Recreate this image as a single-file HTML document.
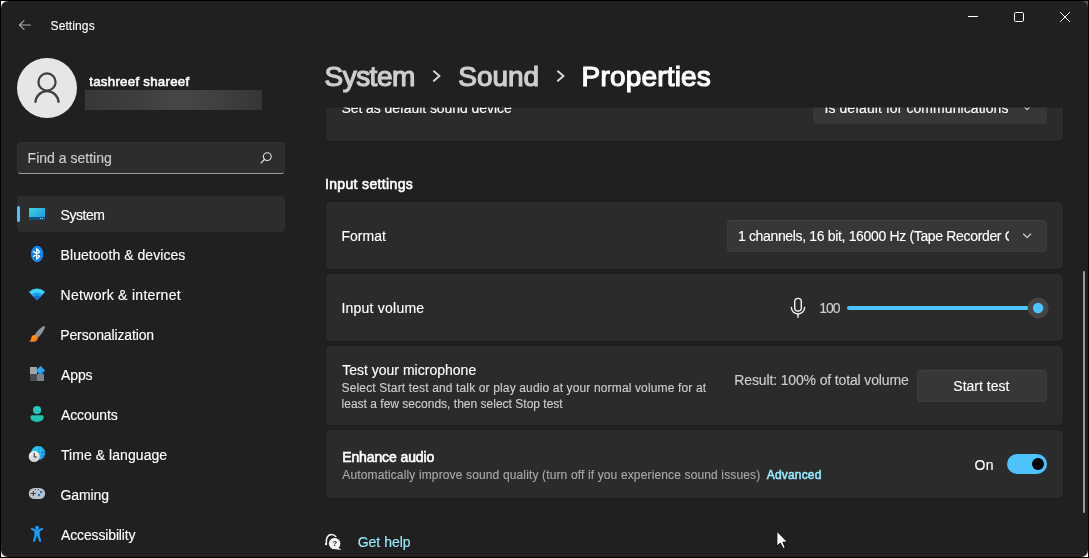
<!DOCTYPE html>
<html lang="en">
<head>
<meta charset="utf-8">
<title>Settings</title>
<style>
html,body{margin:0;padding:0;}
body{width:1089px;height:558px;overflow:hidden;background:#000;font-family:"Liberation Sans",sans-serif;color:#fff;position:relative;}
.abs{position:absolute;}
svg{position:absolute;overflow:visible;}
.t{position:absolute;white-space:nowrap;line-height:1;}
.card{position:absolute;left:325px;width:737px;background:#2b2b2b;border:1px solid #1d1d1d;border-radius:5px;}
.btn{position:absolute;background:#373737;border-radius:4px;box-sizing:border-box;border:1px solid #3c3c3c;border-top-color:#404040;}
</style>
</head>
<body>
<!-- corner underlays -->
<div class="abs" style="left:1px;top:1px;width:1087px;height:556px;background:#f4f4f4;"></div>
<div class="abs" style="left:1080px;top:1px;width:8px;height:8px;background:#555;"></div>
<!-- window -->
<div class="abs" style="left:1px;top:1px;width:1087px;height:556px;background:#202020;border-radius:7px;"></div>

<!-- title bar -->
<svg style="left:18px;top:19px" width="14" height="12" viewBox="0 0 14 12"><path d="M6 1.6 L1.4 6 L6 10.4 M1.4 6 H12.4" fill="none" stroke="#a8a8a8" stroke-width="1.1" stroke-linecap="round" stroke-linejoin="round"/></svg>
<svg style="left:968px;top:11px" width="11" height="12" viewBox="0 0 11 12"><path d="M0 5.5 H10" stroke="#fff" stroke-width="1" fill="none"/></svg>
<svg style="left:1014px;top:12px" width="11" height="11" viewBox="0 0 11 11"><rect x="0.5" y="0.5" width="9" height="9" rx="1.2" stroke="#fff" stroke-width="1" fill="none"/></svg>
<svg style="left:1060px;top:12px" width="11" height="11" viewBox="0 0 11 11"><path d="M0.2 0.2 L9.8 9.8 M9.8 0.2 L0.2 9.8" stroke="#fff" stroke-width="1" fill="none"/></svg>

<!-- account -->
<div class="abs" style="left:17px;top:58px;width:60px;height:60px;border-radius:50%;background:#e6e6e6;"></div>
<svg style="left:17px;top:58px" width="60" height="60" viewBox="0 0 60 60"><circle cx="30" cy="24" r="8.6" fill="none" stroke="#3e3e3e" stroke-width="2.2"/><path d="M18.4 44.8 A11.6 11.6 0 0 1 41.6 44.8" fill="none" stroke="#3e3e3e" stroke-width="2.2"/></svg>
<div class="abs" style="left:85px;top:90px;width:177px;height:20px;background:linear-gradient(90deg,#383838 0%,#3e3e3e 30%,#474747 53%,#404040 75%,#363636 100%);"></div>

<!-- search -->
<div class="abs" style="left:17px;top:142px;width:268px;height:32px;background:#2d2d2d;border-radius:4px;border:1px solid #323232;border-bottom:1px solid #9a9a9a;box-sizing:border-box;"></div>
<svg style="left:259px;top:151px" width="14" height="14" viewBox="0 0 14 14"><circle cx="8.3" cy="5.6" r="3.9" fill="none" stroke="#e4e4e4" stroke-width="1.1"/><path d="M5.4 8.5 L2.1 11.9" stroke="#e4e4e4" stroke-width="1.2" stroke-linecap="round"/></svg>

<!-- nav selection -->
<div class="abs" style="left:17px;top:196px;width:268px;height:36px;background:#2d2d2d;border-radius:4px;"></div>
<div class="abs" style="left:17px;top:206px;width:3px;height:16px;background:#4cc2ff;border-radius:1.5px;"></div>

<!--ICONS_START-->
<!-- nav icons -->
<svg style="left:29px;top:208px" width="16" height="12" viewBox="0 0 16 12"><defs><linearGradient id="gSys" x1="0" y1="0" x2="1" y2="1"><stop offset="0" stop-color="#3ad6dc"/><stop offset="1" stop-color="#1d8fe2"/></linearGradient></defs><rect x="0" y="0" width="16" height="12" rx="1" fill="url(#gSys)"/><rect x="0" y="9" width="16" height="3" fill="#0e5487"/><rect x="11" y="10" width="1" height="1" fill="#9fd8f5"/><rect x="13" y="10" width="1" height="1" fill="#9fd8f5"/></svg>
<svg style="left:30px;top:245px" width="14" height="18" viewBox="0 0 14 18"><ellipse cx="7.15" cy="9" rx="6.25" ry="8.3" fill="#0c86f2"/><path d="M3.4 6.5 L9.7 11.3 L6.6 14.2 V3.8 L9.7 6.7 L3.4 11.5" fill="none" stroke="#fff" stroke-width="1.3" stroke-linejoin="round" stroke-linecap="round"/></svg>
<svg style="left:29px;top:288px" width="16" height="13" viewBox="0 0 16 13"><path d="M8 12.1 L0.3 3.9 A11.3 11.3 0 0 1 15.7 3.9 Z" fill="#3fd1fb" stroke="#3fd1fb" stroke-width="0.6" stroke-linejoin="round"/><path d="M8 12.3 L2.7 6.48 A7.8 7.8 0 0 1 13.3 6.48 Z" fill="#1f9fe9"/><path d="M8 12.3 L4.74 8.68 A4.8 4.8 0 0 1 11.26 8.68 Z" fill="#1070d0"/></svg>
<svg style="left:28px;top:325px" width="18" height="18" viewBox="0 0 18 18"><defs><linearGradient id="gBr" x1="0" y1="0" x2="1" y2="1"><stop offset="0" stop-color="#fbb41c"/><stop offset="1" stop-color="#f7630c"/></linearGradient></defs><path d="M15.1 1.2 C16.3 0.7 17.2 1.5 16.8 2.7 C15.6 6.2 13.1 9.7 9.7 12.9 L6.5 10.4 C8.9 6.4 11.9 3.1 15.1 1.2 Z" fill="#8b959f"/><path d="M6.5 10.1 C8.5 10.2 9.9 11.6 9.7 13.4 C9.5 15.8 7.2 17 4.7 16.8 C3.3 16.7 2 16.9 1.1 16.3 C2.4 15.8 3 15 3.2 13.6 C3.5 11.4 4.7 10 6.5 10.1 Z" fill="url(#gBr)"/></svg>
<svg style="left:29px;top:365px" width="17" height="17" viewBox="0 0 17 17"><defs><linearGradient id="gAp" x1="0" y1="0" x2="1" y2="1"><stop offset="0" stop-color="#35c1f6"/><stop offset="1" stop-color="#1b8be6"/></linearGradient></defs><rect x="1" y="2" width="7" height="7" fill="#a0a5ad"/><rect x="1" y="9" width="7" height="7" fill="#484b50"/><rect x="8" y="9" width="7" height="7" fill="#7d8189"/><path d="M11.6 1 L16.2 5.6 L11.6 10.2 L7 5.6 Z" fill="url(#gAp)"/></svg>
<svg style="left:30px;top:405px" width="14" height="18" viewBox="0 0 14 18"><circle cx="7.05" cy="5" r="4.1" fill="#25c8b9"/><path d="M2.2 10.3 H11.9 A1.8 1.8 0 0 1 13.7 12.1 C13.7 15.2 10.9 16.9 7.05 16.9 C3.2 16.9 0.4 15.2 0.4 12.1 A1.8 1.8 0 0 1 2.2 10.3 Z" fill="#22c3b3"/></svg>
<svg style="left:28px;top:445px" width="18" height="18" viewBox="0 0 18 18"><defs><linearGradient id="gGl" x1="0" y1="0" x2="1" y2="1"><stop offset="0" stop-color="#35d4e6"/><stop offset="0.5" stop-color="#1fa4e4"/><stop offset="1" stop-color="#1272d6"/></linearGradient><linearGradient id="gCl" x1="0" y1="0" x2="0" y2="1"><stop offset="0" stop-color="#f4f4f4"/><stop offset="1" stop-color="#cfcfcf"/></linearGradient></defs><circle cx="10.2" cy="8" r="7.1" fill="url(#gGl)"/><path d="M12.8 1.4 V14.6 M8.2 1.2 V8 M3.6 5.4 H16.8 M9 9.4 H17.2 M10 12.6 H15.6" stroke="#4fd0f4" stroke-width="0.8" opacity="0.6" fill="none"/><circle cx="6.2" cy="11.5" r="5.5" fill="url(#gCl)"/><path d="M6.2 8.3 V12 H8.6" fill="none" stroke="#3a3a3a" stroke-width="1.1" stroke-linecap="round" stroke-linejoin="round"/></svg>
<svg style="left:28px;top:487px" width="18" height="13" viewBox="0 0 18 13"><rect x="0.8" y="1" width="16.3" height="11" rx="5.5" fill="#bcc2c9"/><path d="M5.3 4 V9 M2.8 6.5 H7.8" stroke="#33373c" stroke-width="1" fill="none"/><rect x="12" y="4" width="2.1" height="2.1" fill="#0f7bdc"/><rect x="10" y="7" width="2.1" height="2.1" fill="#0f7bdc"/><circle cx="7.4" cy="2.6" r="0.55" fill="#33373c"/><circle cx="10.5" cy="2.6" r="0.55" fill="#33373c"/></svg>
<svg style="left:30px;top:525px" width="14" height="18" viewBox="0 0 14 18"><circle cx="7.05" cy="2.7" r="2" fill="#1a9af0"/><path d="M0.9 3.3 C1.2 2.6 1.9 2.6 2.5 2.9 L5.6 4.6 H8.5 L11.6 2.9 C12.2 2.6 12.9 2.6 13.2 3.3 C13.5 4 13.1 4.5 12.5 4.8 L9.7 6.4 V10.6 L11.1 15.6 C11.3 16.4 10.9 16.9 10.3 17 C9.6 17.1 9.2 16.8 9 16.1 L7.4 11.2 H6.7 L5.1 16.1 C4.9 16.8 4.5 17.1 3.8 17 C3.2 16.9 2.8 16.4 3 15.6 L4.4 10.6 V6.4 L1.6 4.8 C1 4.5 0.6 4 0.9 3.3 Z" fill="#1a9af0"/></svg>
<!--ICONS_END-->

<!-- breadcrumb chevrons -->
<svg style="left:432px;top:70px" width="10" height="13" viewBox="0 0 10 13"><path d="M1.9 1.3 L7.5 6.05 L1.9 10.8" fill="none" stroke="#d6d6d6" stroke-width="2" stroke-linecap="round" stroke-linejoin="round"/></svg>
<svg style="left:556px;top:70px" width="10" height="13" viewBox="0 0 10 13"><path d="M1.9 1.3 L7.5 6.05 L1.9 10.8" fill="none" stroke="#d6d6d6" stroke-width="2" stroke-linecap="round" stroke-linejoin="round"/></svg>

<!-- cards -->
<div class="abs" style="left:325px;top:107px;width:737px;height:34px;background:#2b2b2b;border:1px solid #1d1d1d;border-top:none;border-radius:0 0 5px 5px;"></div>
<div class="abs" style="left:813px;top:107px;width:234px;height:17px;background:#373737;border-radius:0 0 4px 4px;"></div>
<div class="card" style="top:201px;height:67px;"></div>
<div class="card" style="top:273px;height:67px;"></div>
<div class="card" style="top:345px;height:79px;"></div>
<div class="card" style="top:429px;height:68px;"></div>

<!-- dropdown + chevrons -->
<div class="btn" style="left:727px;top:220px;width:320px;height:32px;"></div>
<svg style="left:1022px;top:232px" width="10" height="7" viewBox="0 0 10 7"><path d="M1.5 2 L5.1 5.6 L8.7 2" fill="none" stroke="#d8d8d8" stroke-width="1.1" stroke-linecap="round" stroke-linejoin="round"/></svg>
<div class="abs" style="left:1020px;top:107px;width:14px;height:8px;overflow:hidden;"><svg style="left:2px;top:-3.3px" width="10" height="7" viewBox="0 0 10 7"><path d="M1.5 2 L5.1 5.6 L8.7 2" fill="none" stroke="#d8d8d8" stroke-width="1.1" stroke-linecap="round" stroke-linejoin="round"/></svg></div>

<!-- mic + slider -->
<svg style="left:789px;top:296px" width="18" height="23" viewBox="0 0 18 23"><rect x="5.7" y="2.4" width="6.6" height="12.6" rx="3.3" fill="none" stroke="#f4f4f4" stroke-width="1.4"/><path d="M2.4 11.4 A6.6 6.6 0 0 0 15.6 11.4" fill="none" stroke="#f4f4f4" stroke-width="1.4" stroke-linecap="round"/><path d="M9 18.2 V21.2" stroke="#f4f4f4" stroke-width="1.4" stroke-linecap="round"/></svg>
<div class="abs" style="left:847px;top:306px;width:186px;height:4px;border-radius:2px;background:#4cc2ff;"></div>
<svg style="left:1026px;top:296px" width="24" height="24" viewBox="0 0 24 24"><circle cx="12.1" cy="11.9" r="10.5" fill="#454545"/><circle cx="12.1" cy="12.1" r="5.25" fill="#4cc2ff"/></svg>

<!-- start test button -->
<div class="btn" style="left:917px;top:370px;width:130px;height:32px;"></div>

<!-- toggle -->
<div class="abs" style="left:1007px;top:454px;width:40px;height:20px;border-radius:10px;background:#4cc2ff;"></div>
<div class="abs" style="left:1032px;top:458px;width:12px;height:12px;border-radius:50%;background:#000;"></div>

<!-- get help icon -->
<svg style="left:324px;top:533px;will-change:transform" width="19" height="19" viewBox="0 0 19 19"><path d="M2.4 10.4 C1.7 6.4 3.3 1.4 7.5 1.4 C9.4 1.4 10.9 2.3 11.8 3.7" fill="none" stroke="#f4f4f4" stroke-width="1.5" stroke-linecap="round"/><circle cx="2" cy="11.2" r="1.15" fill="#f4f4f4"/><circle cx="10.65" cy="10.6" r="6.2" fill="#f7f7f7" stroke="#202020" stroke-width="1"/><path d="M13.6 14 L17.4 17 L11.6 16.2 Z" fill="#f7f7f7"/><text x="10.7" y="13.4" font-size="7.6" font-weight="bold" text-anchor="middle" fill="#1c1c1c" font-family="Liberation Sans, sans-serif">?</text></svg>

<!-- scrollbar -->
<div class="abs" style="left:1083px;top:271px;width:2px;height:242px;border-radius:1px;background:#9c9c9c;"></div>

<div class="abs" id="txt" style="left:0;top:0;width:1089px;height:558px;will-change:transform;">
<div class="abs" style="left:326px;top:107px;width:737px;height:34px;overflow:hidden;"><span class="t" style="left:15.45px;top:-5.85px;font-size:14px;letter-spacing:-0.068px;-webkit-text-stroke:0.13px #ffffff;color:#ffffff;">Set as default sound device</span></div>
<div class="abs" style="left:813px;top:107px;width:235px;height:17px;overflow:hidden;"><span class="t" style="left:11.45px;top:-5.85px;font-size:14px;letter-spacing:0.070px;-webkit-text-stroke:0.13px #ffffff;color:#ffffff;">Is default for communications</span></div>
<div class="abs" style="left:728px;top:220px;width:281px;height:32px;overflow:hidden;"><span class="t" style="left:9.90px;top:9.15px;font-size:14px;letter-spacing:-0.338px;-webkit-text-stroke:0.13px #ffffff;color:#ffffff;">1 channels, 16 bit, 16000 Hz (Tape Recorder C</span></div>

<span class="t" style="left:50.55px;top:19.84px;font-size:12px;letter-spacing:0.103px;-webkit-text-stroke:0.11px #ffffff;color:#ffffff;">Settings</span>
<span class="t" style="left:89.23px;top:74.74px;font-size:13.3px;letter-spacing:0.260px;-webkit-text-stroke:0.56px #ffffff;color:#ffffff;">tashreef shareef</span>
<span class="t" style="left:27.60px;top:151.15px;font-size:14px;letter-spacing:0.015px;-webkit-text-stroke:0.13px #cfcfcf;color:#cfcfcf;">Find a setting</span>
<span class="t" style="left:60.60px;top:208.15px;font-size:14px;letter-spacing:-0.465px;-webkit-text-stroke:0.13px #ffffff;color:#ffffff;">System</span>
<span class="t" style="left:60.60px;top:248.15px;font-size:14px;letter-spacing:0.054px;-webkit-text-stroke:0.13px #ffffff;color:#ffffff;">Bluetooth &amp; devices</span>
<span class="t" style="left:60.60px;top:288.15px;font-size:14px;letter-spacing:0.287px;-webkit-text-stroke:0.13px #ffffff;color:#ffffff;">Network &amp; internet</span>
<span class="t" style="left:60.28px;top:328.15px;font-size:14px;letter-spacing:-0.134px;-webkit-text-stroke:0.13px #ffffff;color:#ffffff;">Personalization</span>
<span class="t" style="left:61.00px;top:368.15px;font-size:14px;letter-spacing:-0.121px;-webkit-text-stroke:0.13px #ffffff;color:#ffffff;">Apps</span>
<span class="t" style="left:61.00px;top:408.15px;font-size:14px;letter-spacing:-0.126px;-webkit-text-stroke:0.13px #ffffff;color:#ffffff;">Accounts</span>
<span class="t" style="left:61.00px;top:448.15px;font-size:14px;letter-spacing:0.057px;-webkit-text-stroke:0.13px #ffffff;color:#ffffff;">Time &amp; language</span>
<span class="t" style="left:60.60px;top:488.15px;font-size:14px;letter-spacing:-0.114px;-webkit-text-stroke:0.13px #ffffff;color:#ffffff;">Gaming</span>
<span class="t" style="left:61.00px;top:528.15px;font-size:14px;letter-spacing:-0.142px;-webkit-text-stroke:0.13px #ffffff;color:#ffffff;">Accessibility</span>
<span class="t" style="left:324.47px;top:63.30px;font-size:28px;letter-spacing:-0.508px;-webkit-text-stroke:1.18px #cecece;color:#cecece;">System</span>
<span class="t" style="left:458.30px;top:63.30px;font-size:28px;letter-spacing:-0.037px;-webkit-text-stroke:1.18px #cecece;color:#cecece;">Sound</span>
<span class="t" style="left:581.58px;top:63.30px;font-size:28px;letter-spacing:0.177px;-webkit-text-stroke:1.18px #ffffff;color:#ffffff;">Properties</span>
<span class="t" style="left:324.90px;top:177.15px;font-size:14px;letter-spacing:0.360px;-webkit-text-stroke:0.59px #ffffff;color:#ffffff;">Input settings</span>
<span class="t" style="left:341.45px;top:229.15px;font-size:14px;letter-spacing:0.023px;-webkit-text-stroke:0.13px #ffffff;color:#ffffff;">Format</span>
<span class="t" style="left:341.45px;top:301.15px;font-size:14px;letter-spacing:0.226px;-webkit-text-stroke:0.13px #ffffff;color:#ffffff;">Input volume</span>
<span class="t" style="left:819.30px;top:301.15px;font-size:14px;letter-spacing:-1.100px;-webkit-text-stroke:0.13px #cfcfcf;color:#cfcfcf;">100</span>
<span class="t" style="left:342.15px;top:363.15px;font-size:14px;letter-spacing:0.011px;-webkit-text-stroke:0.13px #ffffff;color:#ffffff;">Test your microphone</span>
<span class="t" style="left:341.55px;top:381.84px;font-size:12px;letter-spacing:0.142px;-webkit-text-stroke:0.11px #cfcfcf;color:#cfcfcf;">Select Start test and talk or play audio at your normal volume for at</span>
<span class="t" style="left:341.55px;top:397.84px;font-size:12px;letter-spacing:0.009px;-webkit-text-stroke:0.11px #cfcfcf;color:#cfcfcf;">least a few seconds, then select Stop test</span>
<span class="t" style="left:734.28px;top:373.15px;font-size:14px;letter-spacing:-0.136px;-webkit-text-stroke:0.13px #cfcfcf;color:#cfcfcf;">Result: 100% of total volume</span>
<span class="t" style="left:953.30px;top:379.15px;font-size:14px;letter-spacing:0.004px;-webkit-text-stroke:0.13px #ffffff;color:#ffffff;">Start test</span>
<span class="t" style="left:342.15px;top:450.15px;font-size:14px;letter-spacing:-0.100px;-webkit-text-stroke:0.59px #ffffff;color:#ffffff;">Enhance audio</span>
<span class="t" style="left:342.25px;top:468.84px;font-size:12px;letter-spacing:0.140px;-webkit-text-stroke:0.11px #aaaaaa;color:#aaaaaa;">Automatically improve sound quality (turn off if you experience sound issues)</span>
<span class="t" style="left:766.70px;top:468.84px;font-size:12px;letter-spacing:0.192px;-webkit-text-stroke:0.50px #99ebff;color:#99ebff;">Advanced</span>
<span class="t" style="left:974.50px;top:458.15px;font-size:14px;letter-spacing:0.372px;-webkit-text-stroke:0.13px #ffffff;color:#ffffff;">On</span>
<span class="t" style="left:357.70px;top:535.15px;font-size:14px;letter-spacing:0.003px;-webkit-text-stroke:0.13px #99ebff;color:#99ebff;">Get help</span>
</div>

<div class="abs" style="left:325px;top:107px;width:739px;height:1px;background:rgba(32,32,32,0.55);"></div>
<!-- mouse cursor -->
<svg style="left:776px;top:530px" width="13" height="20" viewBox="0 0 13 20"><path d="M0.9 1.3 L0.9 16.1 L4.3 13 L7 18.6 L9.3 17.6 L6.8 12.2 L11.4 12 Z" fill="#fff" stroke="#000" stroke-width="0.9" stroke-linejoin="miter"/></svg>
</body>
</html>
